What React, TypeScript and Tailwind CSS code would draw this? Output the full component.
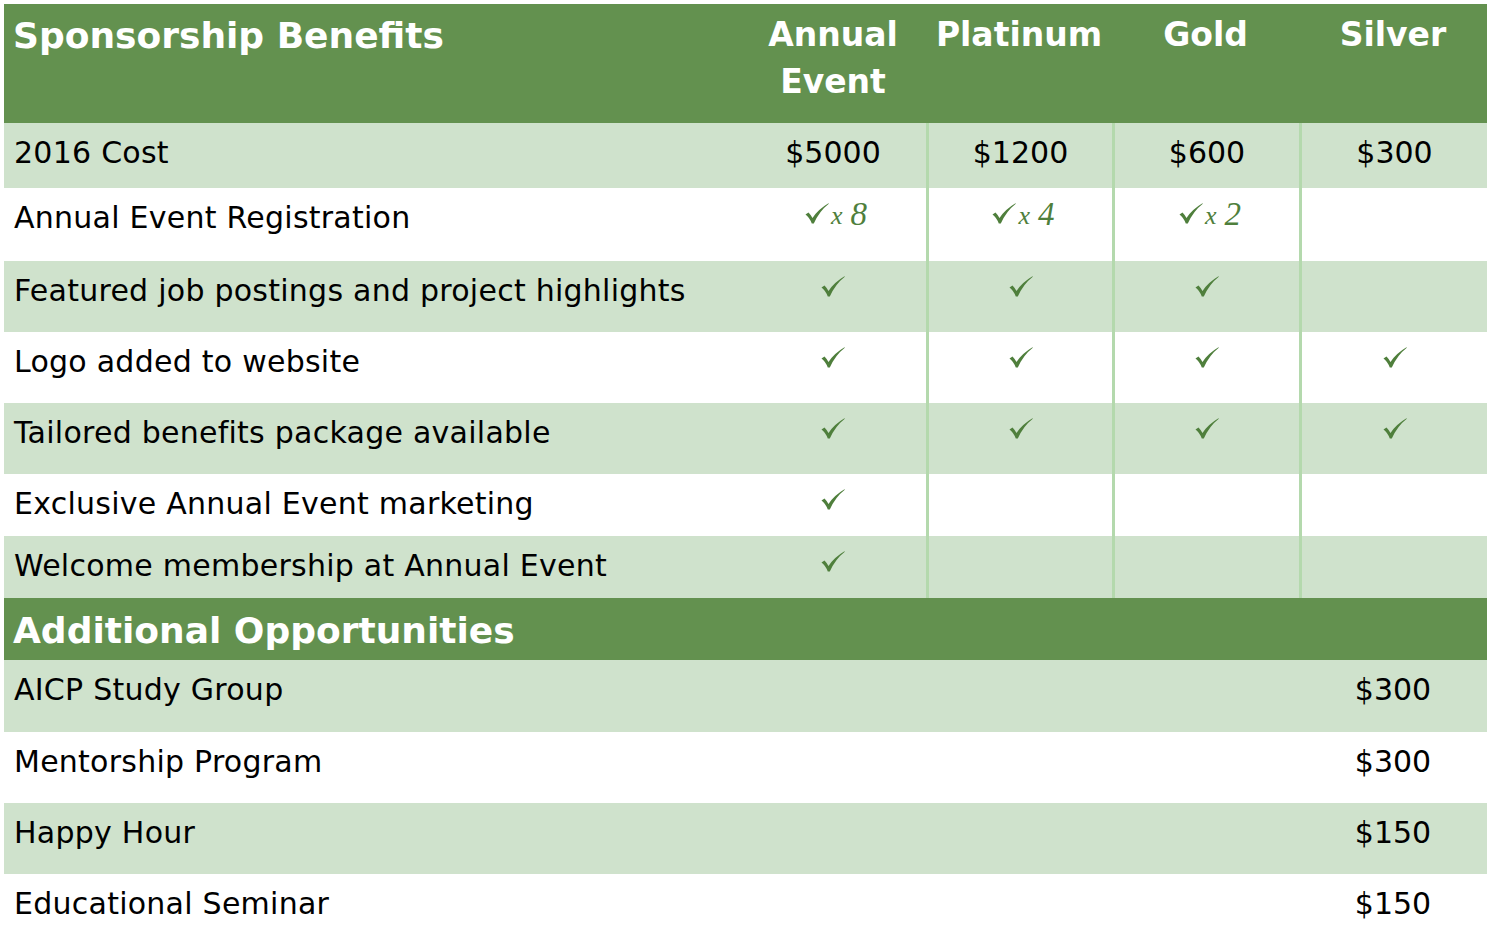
import React from 'react';

type Cell = string | 'check' | { count: number } | null;

type Row = {
    label: string;
    cells: Cell[];
    light: boolean;
    height: string;
};

const benefits: Row[] = [
    { label: '2016 Cost', cells: ['$5000', '$1200', '$600', '$300'], light: true, height: 'h-[65px]' },
    { label: 'Annual Event Registration', cells: [{ count: 8 }, { count: 4 }, { count: 2 }, null], light: false, height: 'h-[73px]' },
    { label: 'Featured job postings and project highlights', cells: ['check', 'check', 'check', null], light: true, height: 'h-[71px]' },
    { label: 'Logo added to website', cells: ['check', 'check', 'check', 'check'], light: false, height: 'h-[71px]' },
    { label: 'Tailored benefits package available', cells: ['check', 'check', 'check', 'check'], light: true, height: 'h-[71px]' },
    { label: 'Exclusive Annual Event marketing', cells: ['check', null, null, null], light: false, height: 'h-[62px]' },
    { label: 'Welcome membership at Annual Event', cells: ['check', null, null, null], light: true, height: 'h-[62px]' },
];

const extras = [
    { label: 'AICP Study Group', price: '$300', light: true, height: 'h-[72px]' },
    { label: 'Mentorship Program', price: '$300', light: false, height: 'h-[71px]' },
    { label: 'Happy Hour', price: '$150', light: true, height: 'h-[71px]' },
    { label: 'Educational Seminar', price: '$150', light: false, height: 'h-[71px]' },
];

const tiers = [['Annual', 'Event'], ['Platinum'], ['Gold'], ['Silver']];

export default function App() {
    return (
        <div className="min-h-screen bg-white pl-[4px] pt-[4px] font-['DejaVu_Sans',Verdana,sans-serif] text-black">
            <div className="grid w-[1483px] grid-cols-[736px_186px_186px_187px_188px]">
                {/* Header */}
                <div className="h-[119px] bg-[#63914f] pl-[9px] pt-[12px] text-[36px] leading-[40px] font-bold text-white">
                    Sponsorship Benefits
                </div>
                {tiers.map((t) => (
                    <div
                        key={t[0]}
                        className="h-[119px] bg-[#63914f] pt-[7px] text-center text-[33px] leading-[47px] font-bold text-white"
                    >
                        {t.map((line) => (
                            <div key={line}>{line}</div>
                        ))}
                    </div>
                ))}

                {/* Benefit rows */}
                {benefits.map((row) => (
                    <React.Fragment key={row.label}>
                        <div
                            className={`${row.height} ${row.light ? 'bg-[#cfe2cc]' : 'bg-white'} pl-[10px] pt-[12px] text-[30px] leading-[35px] tracking-[0.25px]`}
                        >
                            {row.label}
                        </div>
                        {row.cells.map((cell, i) => (
                            <div
                                key={i}
                                className={`${row.height} ${row.light ? 'bg-[#cfe2cc]' : 'bg-white'} ${i > 0 ? 'border-l-[3px] border-[#b4d9ad]' : ''} flex justify-center pt-[12px] text-[30px] leading-[35px]`}
                            >
                                <CellContent cell={cell} />
                            </div>
                        ))}
                    </React.Fragment>
                ))}

                {/* Additional opportunities */}
                <div className="col-span-5 h-[62px] bg-[#63914f] pl-[9px] pt-[13px] text-[36px] leading-[40px] font-bold text-white">
                    Additional Opportunities
                </div>
                {extras.map((row) => (
                    <React.Fragment key={row.label}>
                        <div
                            className={`col-span-4 ${row.height} ${row.light ? 'bg-[#cfe2cc]' : 'bg-white'} pl-[10px] pt-[12px] text-[30px] leading-[35px] tracking-[0.25px]`}
                        >
                            {row.label}
                        </div>
                        <div
                            className={`${row.height} ${row.light ? 'bg-[#cfe2cc]' : 'bg-white'} pt-[12px] text-center text-[30px] leading-[35px]`}
                        >
                            {row.price}
                        </div>
                    </React.Fragment>
                ))}
            </div>
        </div>
    );
}

function CellContent({ cell }: { cell: Cell }) {
    if (cell === null) return null;
    if (cell === 'check')
        return (
            <div className="pt-[3px]">
                <Check />
            </div>
        );
    if (typeof cell === 'object')
        return (
            <div className="flex items-start pl-[6px] font-['Liberation_Serif',serif] italic text-[#4f7f3c]">
                <div className="pt-[3px]">
                    <Check />
                </div>
                <span className="ml-[2px] mt-[3px] text-[26px] leading-[26px]">x</span>
                <span className="ml-[8px] mt-[-2px] text-[33px] leading-[33px]">{cell.count}</span>
            </div>
        );
    return <span>{cell}</span>;
}

function Check() {
    return (
        <svg width="24" height="21" viewBox="0 0 24 21" className="block">
            <path
                d="M0.5 11.5 L3.5 9.5 Q5.5 11.5 7.5 15 Q13 6.5 23.5 0.3 L23.8 0.8 Q14.5 8 8.8 20.5 L6.8 20.5 Q4.5 14.5 0.5 11.5 Z"
                fill="#4f7f3c"
            />
        </svg>
    );
}
